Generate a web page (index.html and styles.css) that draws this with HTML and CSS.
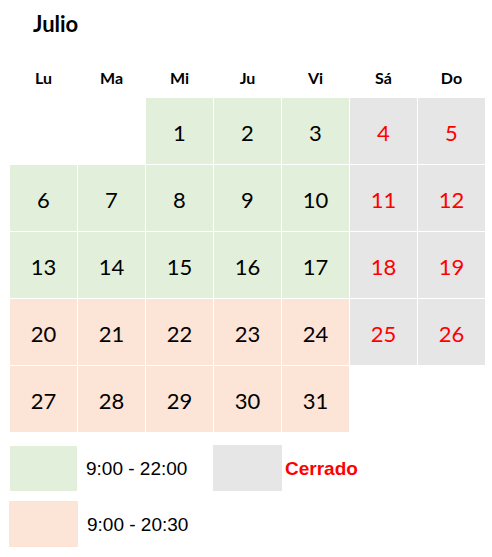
FILE: index.html
```html
<!DOCTYPE html>
<html lang="es">
<head>
<meta charset="utf-8">
<title>Julio</title>
<link rel="stylesheet" href="styles.css">
</head>
<body>
<div class="page">
  <h1 class="title">Julio</h1>
  <div class="weekdays">
    <div>Lu</div><div>Ma</div><div>Mi</div><div>Ju</div><div>Vi</div><div>Sá</div><div>Do</div>
  </div>
  <div class="calendar">
    <div class="cell"></div><div class="cell"></div>
    <div class="cell green">1</div><div class="cell green">2</div><div class="cell green">3</div>
    <div class="cell closed">4</div><div class="cell closed">5</div>

    <div class="cell green">6</div><div class="cell green">7</div><div class="cell green">8</div>
    <div class="cell green">9</div><div class="cell green">10</div>
    <div class="cell closed">11</div><div class="cell closed">12</div>

    <div class="cell green">13</div><div class="cell green">14</div><div class="cell green">15</div>
    <div class="cell green">16</div><div class="cell green">17</div>
    <div class="cell closed">18</div><div class="cell closed">19</div>

    <div class="cell peach">20</div><div class="cell peach">21</div><div class="cell peach">22</div>
    <div class="cell peach">23</div><div class="cell peach">24</div>
    <div class="cell closed">25</div><div class="cell closed">26</div>

    <div class="cell peach">27</div><div class="cell peach">28</div><div class="cell peach">29</div>
    <div class="cell peach">30</div><div class="cell peach">31</div>
    <div class="cell"></div><div class="cell"></div>
  </div>
  <div class="legend">
    <div class="legend-row first">
      <div class="swatch green-swatch"></div>
      <div class="legend-text">9:00 - 22:00</div>
      <div class="swatch gray-swatch"></div>
      <div class="legend-text red">Cerrado</div>
    </div>
    <div class="legend-row second">
      <div class="swatch peach-swatch"></div>
      <div class="legend-text">9:00 - 20:30</div>
    </div>
  </div>
</div>
</body>
</html>
```

FILE: styles.css
```css
html, body {
  margin: 0;
  padding: 0;
  background: #ffffff;
}

.page {
  width: 492px;
  height: 557px;
  padding-left: 10px;
  box-sizing: border-box;
  font-family: Lato, "Noto Sans", sans-serif;
  color: #000000;
}

.title {
  margin: 0;
  padding: 12px 0 0 23px;
  height: 48px;
  box-sizing: border-box;
  font-size: 22px;
  line-height: 24px;
  font-weight: 700;
}

.weekdays {
  display: grid;
  grid-template-columns: repeat(7, 67px);
  column-gap: 1px;
  height: 50px;
  align-items: center;
  font-size: 16px;
  font-weight: 700;
  line-height: 18px;
  text-align: center;
  padding-top: 10px;
  box-sizing: border-box;
}

.calendar {
  display: grid;
  grid-template-columns: repeat(7, 67px);
  grid-auto-rows: 66px;
  gap: 1px;
}

.cell {
  display: flex;
  align-items: center;
  justify-content: center;
  font-size: 22px;
  padding-top: 3px;
  box-sizing: border-box;
}

.green { background: #e2efda; }
.peach { background: #fce4d6; }
.closed { background: #e6e6e6; color: #ff0000; }

.legend {
  font-family: "Liberation Sans", Arial, sans-serif;
  font-size: 19px;
}

.legend-row {
  display: flex;
  align-items: center;
}

.legend-row.first {
  margin-top: 12px;
  height: 47px;
}

.legend-row.second {
  margin-top: 10px;
  margin-left: -1px;
  height: 46px;
}

.swatch {
  flex: none;
}

.green-swatch {
  width: 67px;
  height: 45px;
  margin-top: 1px;
  background: #e2efda;
}

.gray-swatch {
  width: 69px;
  height: 46px;
  background: #e6e6e6;
}

.peach-swatch {
  width: 69px;
  height: 46px;
  background: #fce4d6;
}

.legend-text {
  padding-top: 2px;
}

.first .legend-text:nth-child(2) {
  width: 136px;
  padding-left: 9px;
  box-sizing: border-box;
}

.second .legend-text {
  padding-left: 9px;
}

.red {
  color: #ff0000;
  font-weight: 700;
  padding-left: 3px;
}
```
